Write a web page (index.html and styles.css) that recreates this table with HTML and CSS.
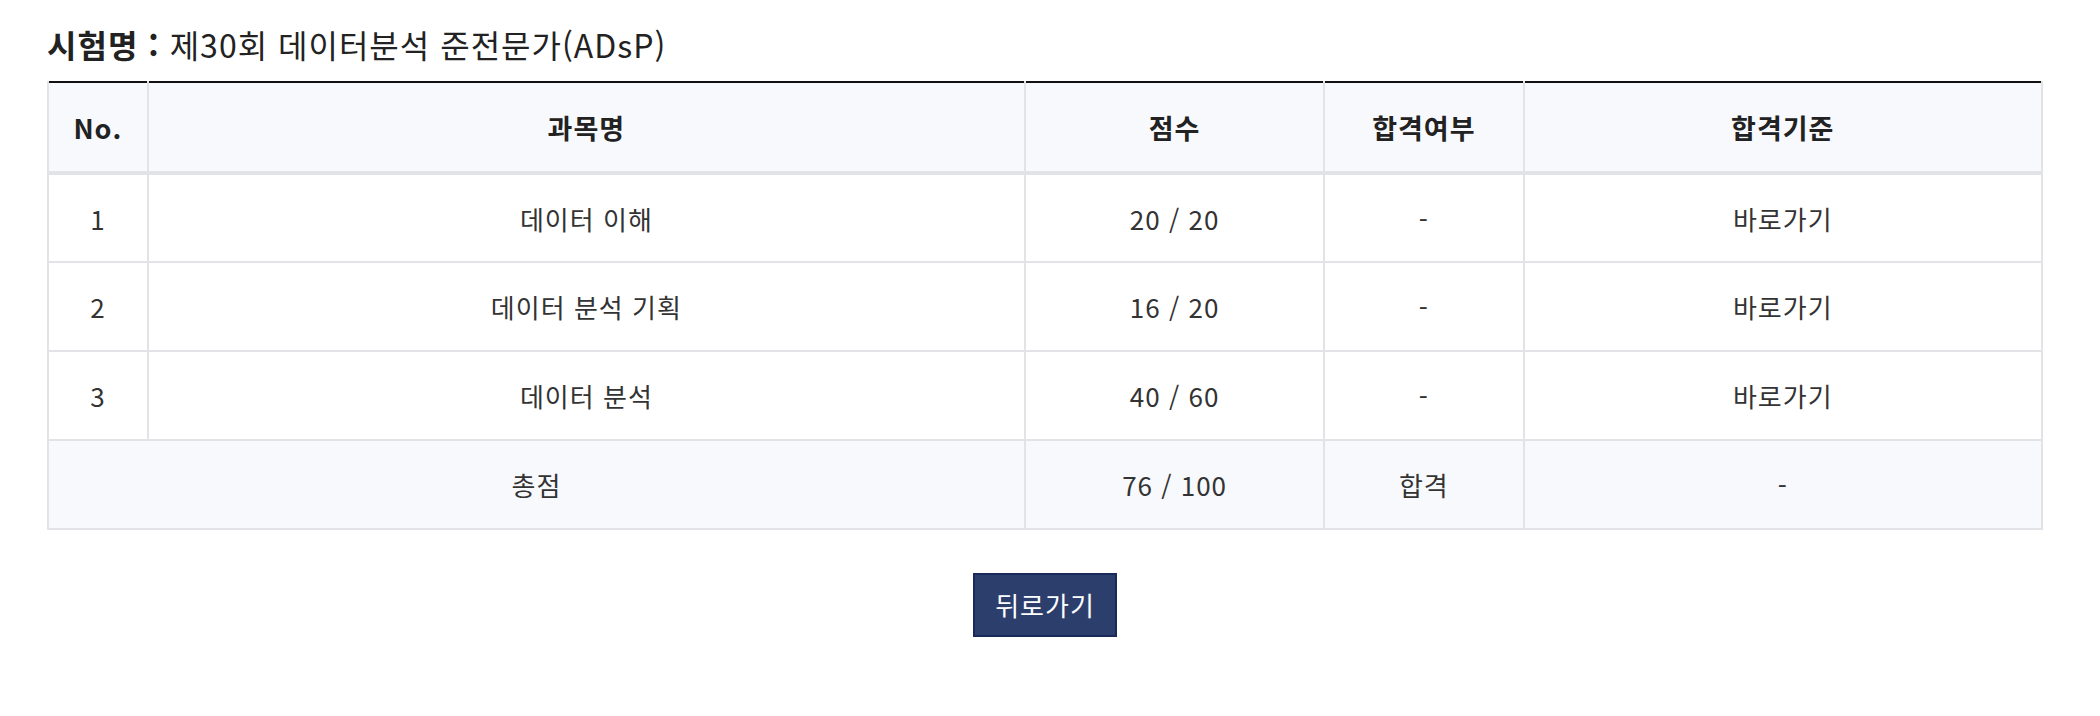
FILE: index.html
```html
<!DOCTYPE html>
<html lang="ko">
<head>
  <meta charset="UTF-8" />
  <meta name="viewport" content="width=device-width, initial-scale=1.0"/>
  <title>시험 결과</title>
  <link rel="stylesheet" href="styles.css">
</head>
<body>

  <div class="result">
    <h2 class="exam-title"><b>시험명 :</b> 제30회 데이터분석 준전문가(ADsP)</h2>

    <table class="score-table">
      <colgroup>
        <col class="c-no" />
        <col class="c-name" />
        <col class="c-score" />
        <col class="c-pass" />
        <col class="c-rule" />
      </colgroup>
      <thead>
        <tr>
          <th>No.</th>
          <th>과목명</th>
          <th>점수</th>
          <th>합격여부</th>
          <th>합격기준</th>
        </tr>
      </thead>
      <tbody>
        <tr>
          <td>1</td>
          <td>데이터 이해</td>
          <td>20 / 20</td>
          <td>-</td>
          <td>바로가기</td>
        </tr>
        <tr>
          <td>2</td>
          <td>데이터 분석 기획</td>
          <td>16 / 20</td>
          <td>-</td>
          <td>바로가기</td>
        </tr>
        <tr>
          <td>3</td>
          <td>데이터 분석</td>
          <td>40 / 60</td>
          <td>-</td>
          <td>바로가기</td>
        </tr>
        <tr class="total">
          <td colspan="2">총점</td>
          <td>76 / 100</td>
          <td>합격</td>
          <td>-</td>
        </tr>
      </tbody>
    </table>

    <div class="actions">
      <button class="back-btn" onclick="history.back()">뒤로가기</button>
    </div>
  </div>

</body>
</html>
```

FILE: styles.css
```css
body {
  margin: 0;
  padding: 0;
  font-family: "Noto Sans CJK KR", "Noto Sans", sans-serif;
  color: #333;
  background: #fff;
}

.result {
  padding: 0 57px 0 47px;
}

.exam-title {
  margin: 0;
  padding-top: 21px;
  font-size: 32px;
  font-weight: normal;
  letter-spacing: 1px;
  line-height: 46px;
  color: #222;
}

.exam-title b {
  font-weight: bold;
}

.score-table {
  width: 100%;
  margin-top: 14px;
  border-collapse: collapse;
  border-top: 2px solid #111;
  font-size: 26px;
  letter-spacing: 1px;
  text-align: center;
}

.c-no { width: 5%; }
.c-name { width: 44%; }
.c-score { width: 15%; }
.c-pass { width: 10%; }
.c-rule { width: 26%; }

.score-table th,
.score-table td {
  border: 2px solid #e1e3e7;
  padding: 0 10px;
  vertical-align: middle;
}

.score-table thead tr {
  height: 91px;
}

.score-table th {
  background: #f8f9fd;
  font-size: 27px;
  font-weight: bold;
  color: #222;
  border-top: none;
  border-bottom-width: 4px;
}

.score-table tbody tr {
  height: 89px;
}

.score-table .total td {
  background: #f8f9fd;
}

.actions {
  margin-top: 43px;
  text-align: center;
}

.back-btn {
  padding: 12px 20px;
  font-family: inherit;
  font-size: 26px;
  letter-spacing: 1px;
  line-height: 36px;
  color: #fff;
  background: #2c3f6c;
  border: 2px solid #1a2a58;
  border-radius: 0;
  cursor: pointer;
}
```
